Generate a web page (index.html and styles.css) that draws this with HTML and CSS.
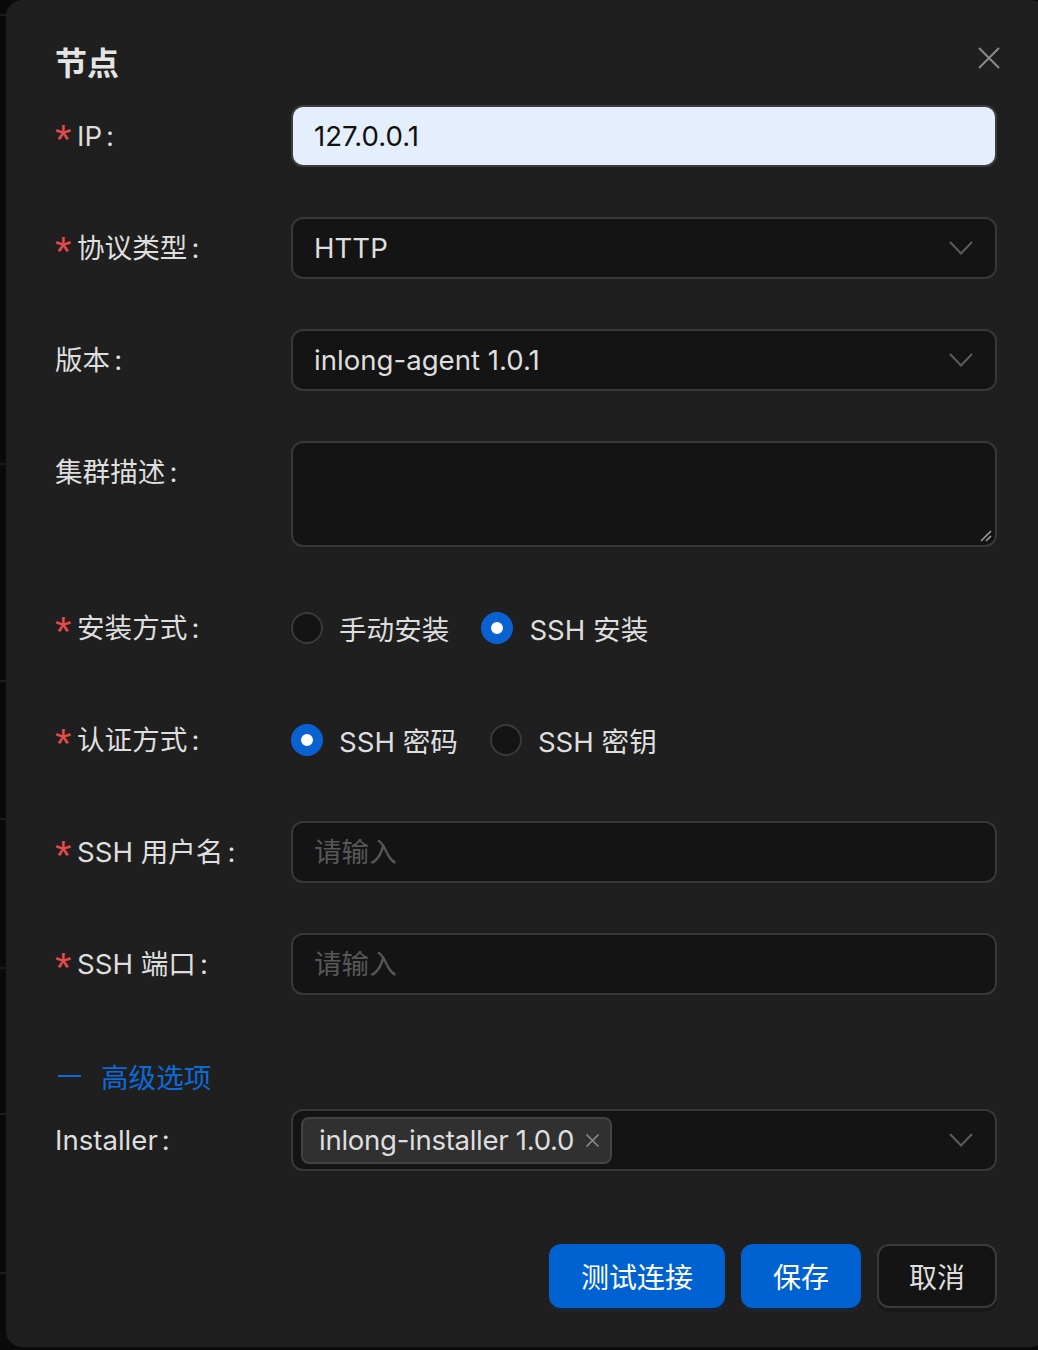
FILE: index.html
```html
<!DOCTYPE html>
<html lang="zh-CN">
<head>
<meta charset="utf-8">
<title>节点</title>
<link rel="stylesheet" href="styles.css">
</head>
<body>
<div class="backdrop">
  <div class="bg-line l1"></div>
  <div class="bg-line l2"></div>
  <div class="bg-line l3"></div>
  <div class="bg-line l4"></div>
  <div class="bg-line l5"></div>
  <div class="bg-line l6"></div>
  <div class="bg-line l7"></div>
</div>
<div class="page">
  <div class="modal">
    <div class="modal-header">
      <div class="modal-title">节点</div>
      <button class="close" aria-label="close">
        <svg width="22" height="22" viewBox="0 0 22 22"><path d="M1 1 L21 21 M21 1 L1 21" stroke="#8a8a8a" stroke-width="2" fill="none"/></svg>
      </button>
    </div>
    <div class="form">
      <div class="row">
        <div class="label"><span class="req">*</span>IP<span class="colon">:</span></div>
        <div class="control"><div class="input autofill">127.0.0.1</div></div>
      </div>
      <div class="row">
        <div class="label"><span class="req">*</span>协议类型<span class="colon">:</span></div>
        <div class="control"><div class="input select"><span>HTTP</span>
          <svg class="arrow" width="24" height="14" viewBox="0 0 24 14"><path d="M1 1 L12 12.5 L23 1" stroke="#5c5c5c" stroke-width="2" fill="none"/></svg></div></div>
      </div>
      <div class="row">
        <div class="label">版本<span class="colon">:</span></div>
        <div class="control"><div class="input select"><span>inlong-agent 1.0.1</span>
          <svg class="arrow" width="24" height="14" viewBox="0 0 24 14"><path d="M1 1 L12 12.5 L23 1" stroke="#5c5c5c" stroke-width="2" fill="none"/></svg></div></div>
      </div>
      <div class="row tall">
        <div class="label">集群描述<span class="colon">:</span></div>
        <div class="control"><div class="textarea">
          <svg class="resize" width="12" height="12" viewBox="0 0 12 12"><path d="M11 1 L1 11 M11 6 L6 11" stroke="#9a9a9a" stroke-width="1.6" fill="none"/></svg>
        </div></div>
      </div>
      <div class="row">
        <div class="label"><span class="req">*</span>安装方式<span class="colon">:</span></div>
        <div class="control radios">
          <label class="radio"><span class="dot"></span><span class="rtext">手动安装</span></label>
          <label class="radio checked"><span class="dot"></span><span class="rtext">SSH 安装</span></label>
        </div>
      </div>
      <div class="row">
        <div class="label"><span class="req">*</span>认证方式<span class="colon">:</span></div>
        <div class="control radios">
          <label class="radio checked"><span class="dot"></span><span class="rtext">SSH 密码</span></label>
          <label class="radio"><span class="dot"></span><span class="rtext">SSH 密钥</span></label>
        </div>
      </div>
      <div class="row">
        <div class="label"><span class="req">*</span>SSH 用户名<span class="colon">:</span></div>
        <div class="control"><div class="input placeholder">请输入</div></div>
      </div>
      <div class="row">
        <div class="label"><span class="req">*</span>SSH 端口<span class="colon">:</span></div>
        <div class="control"><div class="input placeholder">请输入</div></div>
      </div>
      <div class="collapse-header"><span class="minus"></span><span class="ctext">高级选项</span></div>
      <div class="row last">
        <div class="label">Installer<span class="colon">:</span></div>
        <div class="control"><div class="input select multi">
          <span class="tag">inlong-installer 1.0.0
            <svg class="tag-x" width="15" height="15" viewBox="0 0 15 15"><path d="M1.5 1.5 L13.5 13.5 M13.5 1.5 L1.5 13.5" stroke="#8c8c8c" stroke-width="1.6" fill="none"/></svg>
          </span>
          <svg class="arrow" width="24" height="14" viewBox="0 0 24 14"><path d="M1 1 L12 12.5 L23 1" stroke="#5c5c5c" stroke-width="2" fill="none"/></svg>
        </div></div>
      </div>
    </div>
    <div class="footer">
      <button class="btn primary">测试连接</button>
      <button class="btn primary">保存</button>
      <button class="btn default">取消</button>
    </div>
  </div>
</div>
</body>
</html>
```
FILE: styles.css
```css
html, body {
  margin: 0;
  padding: 0;
  width: 1038px;
  height: 1350px;
  overflow: hidden;
  background: #0a0a0a;
  font-family: "Inter", "Noto Sans CJK SC", sans-serif;
}
.backdrop {
  position: absolute;
  left: 0;
  top: 0;
  width: 1038px;
  height: 1350px;
}
.bg-line {
  position: absolute;
  left: 0;
  width: 20px;
  height: 2px;
  background: #1c1c1c;
}
.l1 { top: 14px; }
.l2 { top: 463px; }
.l3 { top: 680px; }
.l4 { top: 818px; }
.l5 { top: 967px; }
.l6 { top: 1113px; }
.l7 { top: 1272px; }

.page {
  position: relative;
  padding-left: 6px;
}
.modal {
  position: relative;
  width: 1040px;
  height: 1347px;
  box-sizing: border-box;
  padding: 40px 49px 0 49px;
  background: #1f1f1f;
  border-radius: 16px;
  color: #dcdcdc;
}
.modal-header {
  height: 48px;
  margin-bottom: 17px;
}
.modal-title {
  font-size: 32px;
  line-height: 48px;
  font-weight: 700;
  color: #e4e4e4;
}
.close {
  position: absolute;
  top: 47px;
  right: 46px;
  width: 22px;
  height: 22px;
  padding: 0;
  border: 0;
  background: transparent;
  display: flex;
}
.form {
  width: 942px;
}
.row {
  display: flex;
  margin-bottom: 50px;
}
.row.last {
  margin-bottom: 0;
}
.label {
  width: 236px;
  flex: none;
  font-size: 27.6px;
  line-height: 62px;
  height: 62px;
  color: #dedede;
  white-space: nowrap;
  display: flex;
  align-items: center;
}
.req {
  color: #e34a4a;
  margin-right: 8px;
  font-size: 42px;
  line-height: 1;
  font-family: "Liberation Sans", sans-serif;
  position: relative;
  top: 4px;
  display: inline-block;
  width: 14px;
}
.colon {
  margin-left: 4px;
}
.control {
  flex: 1;
  min-width: 0;
}
.input {
  box-sizing: border-box;
  height: 62px;
  border: 2px solid #383838;
  border-radius: 12px;
  background: #141414;
  padding: 0 22px 0 21px;
  font-size: 27.6px;
  line-height: 58px;
  color: #dedede;
  display: flex;
  align-items: center;
}
.input.autofill {
  background: #e4eefd;
  border-color: #3d3d3d;
  color: #111;
}
.input.placeholder {
  color: #575757;
}
.select {
  justify-content: space-between;
}
.arrow {
  flex: none;
}
.select.multi {
  padding-left: 8px;
}
.tag {
  box-sizing: border-box;
  height: 47px;
  display: flex;
  align-items: center;
  gap: 11px;
  padding: 0 10px 0 16px;
  background: #303030;
  border: 2px solid #434343;
  border-radius: 8px;
  font-size: 27.6px;
  letter-spacing: -0.3px;
  color: #dedede;
}
.tag-x {
  flex: none;
}
.textarea {
  box-sizing: border-box;
  height: 106px;
  border: 2px solid #383838;
  border-radius: 12px;
  background: #141414;
  display: flex;
  justify-content: flex-end;
  align-items: flex-end;
  padding: 0 3px 3px 0;
}
.radios {
  display: flex;
  align-items: center;
  height: 62px;
}
.radio {
  display: flex;
  align-items: center;
  margin-right: 16px;
}
.dot {
  box-sizing: border-box;
  width: 32px;
  height: 32px;
  border-radius: 50%;
  border: 2px solid #3a3a3a;
  background: #141414;
  flex: none;
}
.radio.checked .dot {
  border: 10px solid #0a62d2;
  background: #ffffff;
}
.rtext {
  padding: 0 16px;
  font-size: 27.6px;
  color: #dedede;
}
.collapse-header {
  height: 62px;
  margin-bottom: 2px;
  display: flex;
  align-items: center;
  color: #0d6ad8;
  font-size: 27.6px;
}
.minus {
  width: 23px;
  height: 2px;
  background: #0d6ad8;
  margin-left: 3px;
  margin-right: 20px;
}
.footer {
  width: 942px;
  margin-top: 73px;
  display: flex;
  justify-content: flex-end;
  gap: 16px;
}
.btn {
  box-sizing: border-box;
  height: 64px;
  padding: 0 30px;
  border-radius: 12px;
  font-size: 28px;
  font-family: "Inter", "Noto Sans CJK SC", sans-serif;
  border: 2px solid transparent;
}
.btn.primary {
  background: #0061d1;
  border-color: #0061d1;
  color: #ffffff;
  box-shadow: 0 4px 0 rgba(0, 60, 180, 0.12);
  min-width: 120px;
}
.btn.default {
  background: #141414;
  border-color: #3a3a3a;
  color: #dedede;
  min-width: 120px;
  box-shadow: 0 4px 0 rgba(0, 0, 0, 0.2);
}
```
